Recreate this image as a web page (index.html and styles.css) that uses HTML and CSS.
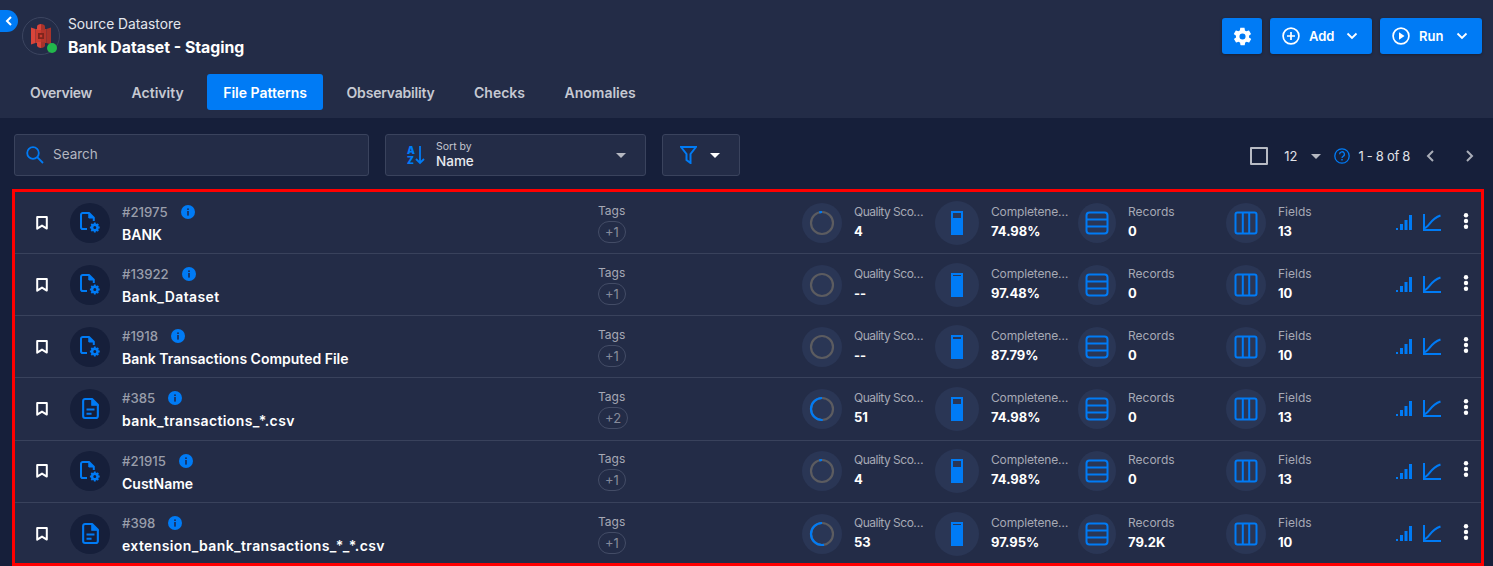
FILE: index.html
```html
<!DOCTYPE html>
<html lang="en">
<head>
  <meta charset="UTF-8">
  <title>Bank Dataset - Staging</title>
  <link rel="stylesheet" href="styles.css">
</head>
<body>
  <svg class="defs" width="0" height="0">
    <symbol id="i-bookmark" viewBox="0 0 12 14"><path d="M1.200 1h9.600v11.600L6 9.600 1.200 12.600z" fill="none" stroke="currentColor" stroke-width="2" stroke-linejoin="round"/></symbol>
    <symbol id="i-info" viewBox="0 0 14 14"><circle cx="7" cy="7" r="7" fill="#007bf5"/><rect x="6.200" y="6" width="1.600" height="4.600" fill="#1c2a52"/><rect x="6.200" y="3.400" width="1.600" height="1.600" fill="#1c2a52"/></symbol>
    <symbol id="i-file-gear" viewBox="0 0 20 21">
      <path d="M7 17H2.800A1.800 1.800 0 0 1 1 15.200V2.800A1.800 1.800 0 0 1 2.800 1H9L13.800 5.800V9" fill="none" stroke="currentColor" stroke-width="2" stroke-linejoin="round"/>
      <path d="M8.800 1V6H13.800L8.800 1Z" fill="currentColor" stroke="currentColor" stroke-width="1"/>
      <circle cx="14.800" cy="15.500" r="2.700" fill="none" stroke="currentColor" stroke-width="2.400"/>
      <path d="M14.800 10.600v2M14.800 18.400v2M9.900 15.500h2M17.700 15.500h2M11.300 12l1.400 1.400M16.900 17.600l1.400 1.400M18.300 12l-1.400 1.400M12.700 17.600L11.300 19" stroke="currentColor" stroke-width="1.800"/>
    </symbol>
    <symbol id="i-file-text" viewBox="0 0 16 20">
      <path d="M2.800 1H9.500L15 6.500V17.200A1.800 1.800 0 0 1 13.200 19H2.800A1.800 1.800 0 0 1 1 17.200V2.800A1.800 1.800 0 0 1 2.800 1Z" fill="none" stroke="currentColor" stroke-width="2" stroke-linejoin="round"/>
      <path d="M9.200 1V6.800H15L9.200 1Z" fill="currentColor" stroke="currentColor" stroke-width="1"/>
      <path d="M4.200 11h7.600M4.200 15h4.800" stroke="currentColor" stroke-width="2"/>
    </symbol>
    <symbol id="i-table-rows" viewBox="0 0 24 24"><rect x="1.500" y="1.500" width="21" height="21" rx="3" fill="none" stroke="currentColor" stroke-width="2"/><path d="M1.500 8.500h21M1.500 15.500h21" stroke="currentColor" stroke-width="2"/></symbol>
    <symbol id="i-table-cols" viewBox="0 0 24 24"><rect x="1.500" y="1.500" width="21" height="21" rx="2" fill="none" stroke="currentColor" stroke-width="2"/><path d="M8.800 1.500v21M15.200 1.500v21" stroke="currentColor" stroke-width="2"/></symbol>
    <symbol id="i-signal" viewBox="0 0 16 15"><path d="M0 13h2v2H0zM4 9h3v6H4zM8.500 5h3v10h-3zM13 0h3v15h-3z" fill="currentColor"/></symbol>
    <symbol id="i-chart" viewBox="0 0 18 17"><path d="M1 0V16H18" fill="none" stroke="currentColor" stroke-width="2"/><path d="M1.500 14C6 13.500 7 5 17.500 1.500" fill="none" stroke="currentColor" stroke-width="2"/></symbol>
    <symbol id="i-dots" viewBox="0 0 6 16"><circle cx="3" cy="2.200" r="2.200" fill="currentColor"/><circle cx="3" cy="8" r="2.200" fill="currentColor"/><circle cx="3" cy="13.800" r="2.200" fill="currentColor"/></symbol>
  </svg>

  <header class="top">
    <div class="top-row">
      <span class="collapse">
        <svg width="8" height="10" viewBox="0 0 8 10"><path d="M6 1L2 5l4 4" fill="none" stroke="#fff" stroke-width="2"/></svg>
      </span>
      <div class="brand">
        <span class="logo">
          <svg width="20" height="24" viewBox="0 0 20 24">
            <path d="M0 3.500L4.500 5v14L0 20.500z" fill="#d9453a"/>
            <path d="M20 3.500L15.500 5v14l4.500 1.500z" fill="#a8332a"/>
            <path d="M4.500 5H10v14H4.500z" fill="#c93c30"/>
            <path d="M10 5h5.500v14H10z" fill="#b5352b"/>
            <path d="M6 2.500C6 1 8 0 10 0v6H6z" fill="#d9453a"/>
            <path d="M14 2.500C14 1 12 0 10 0v6h4z" fill="#a8332a"/>
            <path d="M6 21.500C6 23 8 24 10 24v-6H6z" fill="#d9453a"/>
            <path d="M14 21.500c0 1.500-2 2.500-4 2.500v-6h4z" fill="#a8332a"/>
            <path d="M7 9h6v6H7z" fill="#7d251d"/>
            <path d="M8.800 10.800h2.400v2.400H8.800z" fill="#c93c30"/>
          </svg>
          <span class="dot"></span>
        </span>
        <div class="brand-text">
          <div class="brand-sub">Source Datastore</div>
          <div class="brand-name">Bank Dataset - Staging</div>
        </div>
      </div>
      <div class="top-actions">
        <button class="btn btn-icon">
          <svg width="21" height="21" viewBox="0 0 24 24"><path fill="#fff" fill-rule="evenodd" d="M19.400 13c.1-.3.100-.7.100-1s0-.7-.1-1l2.100-1.600c.2-.2.200-.4.100-.6l-2-3.500c-.1-.2-.4-.3-.6-.2l-2.500 1c-.5-.4-1.100-.7-1.700-1l-.4-2.600c0-.3-.2-.5-.5-.5h-4c-.3 0-.5.200-.5.400l-.4 2.700c-.6.200-1.200.600-1.700 1l-2.500-1c-.2-.1-.5 0-.6.200l-2 3.500c-.1.200-.1.500.1.600L4.600 11c0 .3-.1.700-.1 1s0 .7.100 1l-2.100 1.600c-.2.200-.2.400-.1.600l2 3.500c.1.200.4.300.6.200l2.500-1c.5.400 1.100.7 1.700 1l.4 2.600c0 .3.200.5.500.5h4c.3 0 .5-.2.500-.4l.4-2.700c.6-.2 1.200-.6 1.700-1l2.500 1c.2.100.5 0 .6-.2l2-3.500c.1-.2.100-.5-.1-.6zM12 15.500a3.500 3.500 0 1 1 0-7 3.500 3.500 0 0 1 0 7z"/></svg>
        </button>
        <button class="btn">
          <svg width="18" height="18" viewBox="0 0 18 18"><circle cx="9" cy="9" r="7.900" fill="none" stroke="#fff" stroke-width="1.700"/><path d="M9 5v8M5 9h8" stroke="#fff" stroke-width="1.700"/></svg>
          <span class="btn-label">Add</span>
          <svg class="btn-caret" width="12" height="8" viewBox="0 0 12 8"><path d="M1.500 1.500L6 6l4.500-4.500" fill="none" stroke="#fff" stroke-width="1.800"/></svg>
        </button>
        <button class="btn">
          <svg width="18" height="18" viewBox="0 0 18 18"><circle cx="9" cy="9" r="7.900" fill="none" stroke="#fff" stroke-width="1.700"/><path d="M7 5.300L12.500 9 7 12.700z" fill="#fff"/></svg>
          <span class="btn-label">Run</span>
          <svg class="btn-caret" width="12" height="8" viewBox="0 0 12 8"><path d="M1.500 1.500L6 6l4.500-4.500" fill="none" stroke="#fff" stroke-width="1.800"/></svg>
        </button>
      </div>
    </div>
    <nav class="tabs">
      <a class="tab tab-overview">Overview</a>
      <a class="tab">Activity</a>
      <a class="tab active">File Patterns</a>
      <a class="tab tab-observe">Observability</a>
      <a class="tab">Checks</a>
      <a class="tab">Anomalies</a>
    </nav>
  </header>

  <section class="toolbar">
    <div class="field search">
      <svg width="18" height="18" viewBox="0 0 18 18"><circle cx="7" cy="7" r="5.800" fill="none" stroke="#007bf5" stroke-width="1.800"/><path d="M11.200 11.200L17 17" stroke="#007bf5" stroke-width="1.800"/></svg>
      <span class="search-text">Search</span>
    </div>
    <div class="field sort">
      <span class="az">
        <svg width="19" height="20" viewBox="0 0 19 20"><path d="M14 1v17M10 14l4 4 4-4" fill="none" stroke="#007bf5" stroke-width="1.800"/></svg>
        <span class="az-text">A<br>Z</span>
      </span>
      <div class="sort-text">
        <div class="sort-sub">Sort by</div>
        <div class="sort-val">Name</div>
      </div>
      <span class="caret caret-grey"></span>
    </div>
    <div class="field filter">
      <svg width="17" height="18" viewBox="0 0 17 18"><path d="M1 1h15l-5.500 7v9l-4-3V8z" fill="none" stroke="#007bf5" stroke-width="2"/></svg>
      <span class="caret"></span>
    </div>
    <div class="pager">
      <span class="check"></span>
      <span class="per-page">12</span>
      <span class="caret caret-grey"></span>
      <svg class="help" width="16" height="16" viewBox="0 0 16 16"><circle cx="8" cy="8" r="7.200" fill="none" stroke="#007bf5" stroke-width="1.300"/><path d="M5.600 6.200a2.400 2.400 0 1 1 3.500 2.100c-.8.400-1.100.8-1.100 1.700" fill="none" stroke="#007bf5" stroke-width="1.300"/><rect x="7.300" y="11" width="1.400" height="1.500" fill="#007bf5"/></svg>
      <span class="range">1 - 8 of 8</span>
      <svg class="page-prev" width="10" height="12" viewBox="0 0 10 12"><path d="M8 1L3 6l5 5" fill="none" stroke="#a9adb8" stroke-width="2"/></svg>
      <svg class="page-next" width="10" height="12" viewBox="0 0 10 12"><path d="M2 1l5 5-5 5" fill="none" stroke="#a9adb8" stroke-width="2"/></svg>
    </div>
  </section>

  <section class="list">
    <div class="row">
      <div class="c-mark"><svg class="mark" width="12" height="14"><use href="#i-bookmark"/></svg></div>
      <div class="c-name">
        <span class="disc disc-dark"><svg class="ic-gear" width="20" height="21"><use href="#i-file-gear"/></svg></span>
        <div>
          <div class="id-line"><span>#21975</span><svg width="14" height="14"><use href="#i-info"/></svg></div>
          <div class="name">BANK</div>
        </div>
      </div>
      <div class="c-tags"><div class="tags-label">Tags</div><span class="pill">+1</span></div>
      <div class="c-stat c-q">
        <span class="disc"><svg width="26" height="26" viewBox="0 0 26 26"><circle class="ring" cx="13" cy="13" r="11"/><circle class="ring-on" cx="13" cy="13" r="11" pathLength="100" stroke-dasharray="4 96"/></svg></span>
        <div class="stat-text"><div class="lbl lbl-q">Quality Sco…</div><div class="val">4</div></div>
      </div>
      <div class="c-stat c-comp">
        <span class="disc disc-lg"><span class="gauge"><span class="gauge-gap" style="height:25%"></span></span></span>
        <div class="stat-text"><div class="lbl lbl-comp">Completene…</div><div class="val">74.98%</div></div>
      </div>
      <div class="c-stat c-rec">
        <span class="disc disc-sm"><svg class="ic-table" width="24" height="24"><use href="#i-table-rows"/></svg></span>
        <div class="stat-text"><div class="lbl">Records</div><div class="val">0</div></div>
      </div>
      <div class="c-stat c-fld">
        <span class="disc"><svg class="ic-table" width="24" height="24"><use href="#i-table-cols"/></svg></span>
        <div class="stat-text"><div class="lbl">Fields</div><div class="val">13</div></div>
      </div>
      <div class="c-act">
        <svg class="ic-signal" width="16" height="15"><use href="#i-signal"/></svg>
        <svg class="ic-chart" width="18" height="17"><use href="#i-chart"/></svg>
        <svg class="ic-dots" width="6" height="16"><use href="#i-dots"/></svg>
      </div>
    </div>

    <div class="row">
      <div class="c-mark"><svg class="mark" width="12" height="14"><use href="#i-bookmark"/></svg></div>
      <div class="c-name">
        <span class="disc disc-dark"><svg class="ic-gear" width="20" height="21"><use href="#i-file-gear"/></svg></span>
        <div>
          <div class="id-line"><span>#13922</span><svg width="14" height="14"><use href="#i-info"/></svg></div>
          <div class="name name-wide">Bank_Dataset</div>
        </div>
      </div>
      <div class="c-tags"><div class="tags-label">Tags</div><span class="pill">+1</span></div>
      <div class="c-stat c-q">
        <span class="disc"><svg width="26" height="26" viewBox="0 0 26 26"><circle class="ring" cx="13" cy="13" r="11"/></svg></span>
        <div class="stat-text"><div class="lbl lbl-q">Quality Sco…</div><div class="val">--</div></div>
      </div>
      <div class="c-stat c-comp">
        <span class="disc disc-lg"><span class="gauge"><span class="gauge-gap" style="height:3%"></span></span></span>
        <div class="stat-text"><div class="lbl lbl-comp">Completene…</div><div class="val">97.48%</div></div>
      </div>
      <div class="c-stat c-rec">
        <span class="disc disc-sm"><svg class="ic-table" width="24" height="24"><use href="#i-table-rows"/></svg></span>
        <div class="stat-text"><div class="lbl">Records</div><div class="val">0</div></div>
      </div>
      <div class="c-stat c-fld">
        <span class="disc"><svg class="ic-table" width="24" height="24"><use href="#i-table-cols"/></svg></span>
        <div class="stat-text"><div class="lbl">Fields</div><div class="val">10</div></div>
      </div>
      <div class="c-act">
        <svg class="ic-signal" width="16" height="15"><use href="#i-signal"/></svg>
        <svg class="ic-chart" width="18" height="17"><use href="#i-chart"/></svg>
        <svg class="ic-dots" width="6" height="16"><use href="#i-dots"/></svg>
      </div>
    </div>

    <div class="row">
      <div class="c-mark"><svg class="mark" width="12" height="14"><use href="#i-bookmark"/></svg></div>
      <div class="c-name">
        <span class="disc disc-dark"><svg class="ic-gear" width="20" height="21"><use href="#i-file-gear"/></svg></span>
        <div>
          <div class="id-line"><span>#1918</span><svg width="14" height="14"><use href="#i-info"/></svg></div>
          <div class="name">Bank Transactions Computed File</div>
        </div>
      </div>
      <div class="c-tags"><div class="tags-label">Tags</div><span class="pill">+1</span></div>
      <div class="c-stat c-q">
        <span class="disc"><svg width="26" height="26" viewBox="0 0 26 26"><circle class="ring" cx="13" cy="13" r="11"/></svg></span>
        <div class="stat-text"><div class="lbl lbl-q">Quality Sco…</div><div class="val">--</div></div>
      </div>
      <div class="c-stat c-comp">
        <span class="disc disc-lg"><span class="gauge"><span class="gauge-gap" style="height:12%"></span></span></span>
        <div class="stat-text"><div class="lbl lbl-comp">Completene…</div><div class="val">87.79%</div></div>
      </div>
      <div class="c-stat c-rec">
        <span class="disc disc-sm"><svg class="ic-table" width="24" height="24"><use href="#i-table-rows"/></svg></span>
        <div class="stat-text"><div class="lbl">Records</div><div class="val">0</div></div>
      </div>
      <div class="c-stat c-fld">
        <span class="disc"><svg class="ic-table" width="24" height="24"><use href="#i-table-cols"/></svg></span>
        <div class="stat-text"><div class="lbl">Fields</div><div class="val">10</div></div>
      </div>
      <div class="c-act">
        <svg class="ic-signal" width="16" height="15"><use href="#i-signal"/></svg>
        <svg class="ic-chart" width="18" height="17"><use href="#i-chart"/></svg>
        <svg class="ic-dots" width="6" height="16"><use href="#i-dots"/></svg>
      </div>
    </div>

    <div class="row">
      <div class="c-mark"><svg class="mark" width="12" height="14"><use href="#i-bookmark"/></svg></div>
      <div class="c-name">
        <span class="disc disc-dark"><svg class="ic-doc" width="17" height="21"><use href="#i-file-text"/></svg></span>
        <div>
          <div class="id-line"><span>#385</span><svg width="14" height="14"><use href="#i-info"/></svg></div>
          <div class="name name-wide">bank_transactions_*.csv</div>
        </div>
      </div>
      <div class="c-tags"><div class="tags-label">Tags</div><span class="pill">+2</span></div>
      <div class="c-stat c-q">
        <span class="disc"><svg width="26" height="26" viewBox="0 0 26 26"><circle class="ring" cx="13" cy="13" r="11"/><circle class="ring-on" cx="13" cy="13" r="11" pathLength="100" stroke-dasharray="51 49"/></svg></span>
        <div class="stat-text"><div class="lbl lbl-q">Quality Sco…</div><div class="val">51</div></div>
      </div>
      <div class="c-stat c-comp">
        <span class="disc disc-lg"><span class="gauge"><span class="gauge-gap" style="height:25%"></span></span></span>
        <div class="stat-text"><div class="lbl lbl-comp">Completene…</div><div class="val">74.98%</div></div>
      </div>
      <div class="c-stat c-rec">
        <span class="disc disc-sm"><svg class="ic-table" width="24" height="24"><use href="#i-table-rows"/></svg></span>
        <div class="stat-text"><div class="lbl">Records</div><div class="val">0</div></div>
      </div>
      <div class="c-stat c-fld">
        <span class="disc"><svg class="ic-table" width="24" height="24"><use href="#i-table-cols"/></svg></span>
        <div class="stat-text"><div class="lbl">Fields</div><div class="val">13</div></div>
      </div>
      <div class="c-act">
        <svg class="ic-signal" width="16" height="15"><use href="#i-signal"/></svg>
        <svg class="ic-chart" width="18" height="17"><use href="#i-chart"/></svg>
        <svg class="ic-dots" width="6" height="16"><use href="#i-dots"/></svg>
      </div>
    </div>

    <div class="row">
      <div class="c-mark"><svg class="mark" width="12" height="14"><use href="#i-bookmark"/></svg></div>
      <div class="c-name">
        <span class="disc disc-dark"><svg class="ic-gear" width="20" height="21"><use href="#i-file-gear"/></svg></span>
        <div>
          <div class="id-line"><span>#21915</span><svg width="14" height="14"><use href="#i-info"/></svg></div>
          <div class="name">CustName</div>
        </div>
      </div>
      <div class="c-tags"><div class="tags-label">Tags</div><span class="pill">+1</span></div>
      <div class="c-stat c-q">
        <span class="disc"><svg width="26" height="26" viewBox="0 0 26 26"><circle class="ring" cx="13" cy="13" r="11"/><circle class="ring-on" cx="13" cy="13" r="11" pathLength="100" stroke-dasharray="4 96"/></svg></span>
        <div class="stat-text"><div class="lbl lbl-q">Quality Sco…</div><div class="val">4</div></div>
      </div>
      <div class="c-stat c-comp">
        <span class="disc disc-lg"><span class="gauge"><span class="gauge-gap" style="height:25%"></span></span></span>
        <div class="stat-text"><div class="lbl lbl-comp">Completene…</div><div class="val">74.98%</div></div>
      </div>
      <div class="c-stat c-rec">
        <span class="disc disc-sm"><svg class="ic-table" width="24" height="24"><use href="#i-table-rows"/></svg></span>
        <div class="stat-text"><div class="lbl">Records</div><div class="val">0</div></div>
      </div>
      <div class="c-stat c-fld">
        <span class="disc"><svg class="ic-table" width="24" height="24"><use href="#i-table-cols"/></svg></span>
        <div class="stat-text"><div class="lbl">Fields</div><div class="val">13</div></div>
      </div>
      <div class="c-act">
        <svg class="ic-signal" width="16" height="15"><use href="#i-signal"/></svg>
        <svg class="ic-chart" width="18" height="17"><use href="#i-chart"/></svg>
        <svg class="ic-dots" width="6" height="16"><use href="#i-dots"/></svg>
      </div>
    </div>

    <div class="row">
      <div class="c-mark"><svg class="mark" width="12" height="14"><use href="#i-bookmark"/></svg></div>
      <div class="c-name">
        <span class="disc disc-dark"><svg class="ic-doc" width="17" height="21"><use href="#i-file-text"/></svg></span>
        <div>
          <div class="id-line"><span>#398</span><svg width="14" height="14"><use href="#i-info"/></svg></div>
          <div class="name name-wide">extension_bank_transactions_*_*.csv</div>
        </div>
      </div>
      <div class="c-tags"><div class="tags-label">Tags</div><span class="pill">+1</span></div>
      <div class="c-stat c-q">
        <span class="disc"><svg width="26" height="26" viewBox="0 0 26 26"><circle class="ring" cx="13" cy="13" r="11"/><circle class="ring-on" cx="13" cy="13" r="11" pathLength="100" stroke-dasharray="53 47"/></svg></span>
        <div class="stat-text"><div class="lbl lbl-q">Quality Sco…</div><div class="val">53</div></div>
      </div>
      <div class="c-stat c-comp">
        <span class="disc disc-lg"><span class="gauge"><span class="gauge-gap" style="height:3%"></span></span></span>
        <div class="stat-text"><div class="lbl lbl-comp">Completene…</div><div class="val">97.95%</div></div>
      </div>
      <div class="c-stat c-rec">
        <span class="disc disc-sm"><svg class="ic-table" width="24" height="24"><use href="#i-table-rows"/></svg></span>
        <div class="stat-text"><div class="lbl">Records</div><div class="val">79.2K</div></div>
      </div>
      <div class="c-stat c-fld">
        <span class="disc"><svg class="ic-table" width="24" height="24"><use href="#i-table-cols"/></svg></span>
        <div class="stat-text"><div class="lbl">Fields</div><div class="val">10</div></div>
      </div>
      <div class="c-act">
        <svg class="ic-signal" width="16" height="15"><use href="#i-signal"/></svg>
        <svg class="ic-chart" width="18" height="17"><use href="#i-chart"/></svg>
        <svg class="ic-dots" width="6" height="16"><use href="#i-dots"/></svg>
      </div>
    </div>
  </section>
</body>
</html>
```

FILE: styles.css
```css
* {
  box-sizing: border-box;
}
html, body {
  height: 100%;
}
body {
  margin: 0;
  height: 566px;
  overflow: hidden;
  font-family: Inter, "Noto Sans", sans-serif;
  background-color: #161f3a;
  color: #fff;
}
.defs {
  display: block;
  height: 0;
}

/* header */
.top {
  height: 118px;
  background-color: #232c47;
}
.top-row {
  display: flex;
  align-items: flex-start;
  height: 74px;
  padding-top: 10px;
}
.collapse {
  display: flex;
  align-items: center;
  justify-content: center;
  width: 18px;
  height: 22px;
  margin-right: 4px;
  background-color: #007bf5;
  border-radius: 0 11px 11px 0;
}
.brand {
  display: flex;
  gap: 8px;
  padding-top: 7px;
}
.logo {
  position: relative;
  display: flex;
  align-items: center;
  justify-content: center;
  width: 38px;
  height: 38px;
  border: 1px solid #3c4560;
  border-radius: 50%;
}
.dot {
  position: absolute;
  right: 2px;
  bottom: 1px;
  width: 10px;
  height: 10px;
  background-color: #22b84c;
  border-radius: 50%;
}
.brand-text {
  margin-top: -3px;
}
.brand-sub {
  font-size: 13.8px;
  line-height: 20px;
  color: #e4e6ec;
}
.brand-name {
  margin-top: 4px;
  font-size: 15.8px;
  line-height: 20px;
  font-weight: 700;
}
.top-actions {
  display: flex;
  gap: 8px;
  margin-left: auto;
  margin-right: 11px;
  padding-top: 8px;
}
.btn {
  display: flex;
  align-items: center;
  width: 102px;
  height: 36px;
  padding: 0 12px;
  border: none;
  border-radius: 3px;
  background-color: #007bf5;
  color: #fff;
  font-family: inherit;
  font-size: 13px;
  font-weight: 600;
  box-shadow: 0 1px 3px rgba(0, 0, 0, 0.3);
}
.btn-icon {
  width: 40px;
  justify-content: center;
  padding: 0;
}
.btn-label {
  margin-left: 9px;
}
.btn-caret {
  margin-left: auto;
  margin-right: 2px;
}
.tabs {
  display: flex;
  gap: 7.5px;
  padding-left: 14px;
}
.tab {
  display: flex;
  align-items: center;
  height: 36px;
  padding: 1px 16px 0;
  border-radius: 3px;
  font-size: 14px;
  font-weight: 600;
  color: #c6c9d2;
}
.tab-overview {
  letter-spacing: -0.3px;
}
.tab-observe {
  letter-spacing: -0.2px;
}
.tab.active {
  background-color: #007bf5;
  color: #fff;
}

/* toolbar */
.toolbar {
  display: flex;
  align-items: center;
  height: 71px;
  padding: 16px 14px 13px;
}
.field {
  display: flex;
  align-items: center;
  height: 42px;
  background-color: #232c47;
  border: 1px solid #3a435d;
  border-radius: 3px;
}
.search {
  width: 355px;
  padding-left: 11px;
  gap: 9px;
  font-size: 13.5px;
  color: #b3b6c0;
}
.search-text {
  margin-top: -2px;
}
.sort {
  width: 261px;
  margin-left: 16px;
  padding: 0 19px 0 20px;
}
.az {
  position: relative;
  width: 19px;
  height: 20px;
}
.az svg {
  position: absolute;
  left: 0;
  top: 0;
}
.az-text {
  position: absolute;
  left: 1px;
  top: 0;
  font-size: 10px;
  line-height: 10px;
  font-weight: 900;
  color: #007bf5;
}
.sort-text {
  margin-left: 11px;
}
.sort-sub {
  font-size: 10.5px;
  line-height: 12px;
  color: #c3c6cf;
}
.sort-val {
  font-size: 13.5px;
  line-height: 16px;
  font-weight: 500;
  color: #e8eaef;
}
.sort .caret {
  margin-left: auto;
}
.caret {
  width: 0;
  height: 0;
  border-left: 5px solid transparent;
  border-right: 5px solid transparent;
  border-top: 5px solid #fff;
}
.caret-grey {
  border-top-color: #b5b8c1;
}
.filter {
  width: 78px;
  margin-left: 16px;
  padding-left: 17px;
  gap: 13px;
}
.pager {
  display: flex;
  align-items: center;
  margin-left: auto;
  margin-right: 4px;
  padding-top: 2px;
  font-size: 13px;
  color: #e0e2e8;
}
.check {
  width: 18px;
  height: 18px;
  border: 2px solid #b8bbc4;
  border-radius: 1px;
}
.per-page {
  margin-left: 16px;
}
.pager .caret {
  margin-left: 14px;
}
.help {
  margin-left: 13px;
}
.range {
  margin-left: 8px;
  letter-spacing: -0.3px;
}
.page-prev {
  margin-left: 15px;
}
.page-next {
  margin-left: 30px;
}

/* list */
.list {
  width: 1472px;
  height: 377px;
  margin-left: 12px;
  border: 3px solid #f00;
  background-color: #232c47;
}
.row {
  display: flex;
  align-items: center;
  height: 62.15px;
  border-bottom: 1px solid #39425c;
}
.row:last-child {
  border-bottom: none;
}
.c-mark {
  display: flex;
  width: 55px;
  padding-left: 21px;
}
.mark {
  color: #fff;
}
.c-name {
  display: flex;
  align-items: center;
  gap: 12px;
  width: 528px;
}
.disc {
  display: flex;
  flex: none;
  align-items: center;
  justify-content: center;
  width: 40px;
  height: 40px;
  background-color: #2a3655;
  border-radius: 50%;
}
.disc-dark {
  background-color: #161f3a;
}
.disc-lg {
  width: 44px;
  height: 44px;
}
.disc-sm {
  width: 38px;
}
.ic-gear, .ic-doc, .ic-table, .ic-signal, .ic-chart {
  color: #007bf5;
}
.id-line {
  display: flex;
  align-items: center;
  gap: 13px;
  padding-top: 3px;
  font-size: 13.2px;
  line-height: 16px;
  font-weight: 500;
  color: #9a9eab;
}
.name {
  margin-top: 6px;
  font-size: 14px;
  line-height: 18px;
  font-weight: 600;
}
.name-wide {
  letter-spacing: 0.38px;
}
.c-tags {
  width: 204px;
}
.tags-label {
  font-size: 12px;
  line-height: 16px;
  color: #a6a9b5;
}
.pill {
  display: inline-block;
  min-width: 26px;
  height: 22px;
  margin-top: 2px;
  padding: 0 6px;
  border: 1px solid #434c66;
  border-radius: 11px;
  font-size: 13px;
  line-height: 20px;
  text-align: center;
  color: #868b9a;
}
.c-stat {
  display: flex;
  align-items: center;
  gap: 12px;
}
.c-q { width: 133px; }
.c-comp { width: 143px; }
.c-rec { width: 148px; }
.c-fld { width: 170px; }
.stat-text {
  padding-bottom: 2px;
}
.lbl {
  font-size: 12px;
  line-height: 16px;
  color: #a6a9b5;
  white-space: nowrap;
}
.lbl-q {
  letter-spacing: -0.5px;
}
.lbl-comp {
  letter-spacing: -0.15px;
}
.val {
  margin-top: 2px;
  font-size: 13px;
  line-height: 18px;
  font-weight: 700;
}
.ring, .ring-on {
  fill: none;
  stroke-width: 2.2;
}
.ring {
  stroke: #5c5c60;
}
/* progress runs counter-clockwise from the top */
.ring-on {
  stroke: #007bf5;
  transform: scaleX(-1) rotate(-90deg);
  transform-origin: 13px 13px;
}
.gauge {
  display: block;
  width: 12px;
  height: 24px;
  padding-top: 2px;
  background-color: #007bf5;
}
.gauge-gap {
  display: block;
  width: 8px;
  margin: 0 auto;
  background-color: #2a3655;
}
.c-act {
  display: flex;
  align-items: center;
}
.ic-chart {
  margin-left: 11px;
}
.ic-dots {
  margin-left: 22px;
  margin-top: -4px;
  color: #fff;
}
```
